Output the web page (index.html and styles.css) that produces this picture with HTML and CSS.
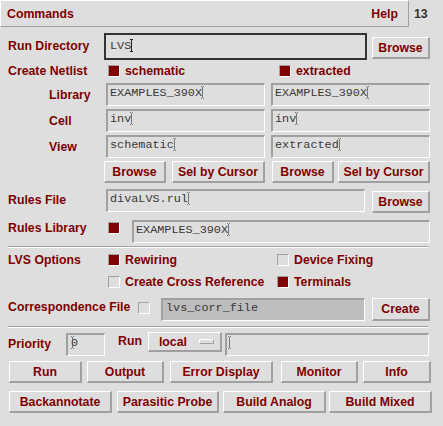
FILE: index.html
```html
<!DOCTYPE html>
<html>
<head>
  <title>LVS</title>
  <link rel="stylesheet" href="styles.css">
</head>
<body>
  <div class="top">
    <div class="menubar"><span>Commands</span><span>Help</span></div>
    <div class="pageno">13</div>
  </div>

  <div class="row rundir">
    <span class="label">Run Directory</span>
    <div class="field focus">LVS<span class="caret solid"></span></div>
    <button class="btn browse-top">Browse</button>
  </div>

  <div class="row netlist">
    <span class="label w100">Create Netlist</span>
    <label class="opt w171"><span class="box on"></span>schematic</label>
    <label class="opt"><span class="box on"></span>extracted</label>
  </div>

  <div class="row lib first">
    <span class="label sub">Library</span>
    <div class="field half">EXAMPLES_390X<span class="caret"></span></div>
    <div class="field half">EXAMPLES_390X<span class="caret"></span></div>
  </div>
  <div class="row lib">
    <span class="label sub">Cell</span>
    <div class="field half">inv<span class="caret"></span></div>
    <div class="field half">inv<span class="caret"></span></div>
  </div>
  <div class="row lib">
    <span class="label sub">View</span>
    <div class="field half">schematic<span class="caret"></span></div>
    <div class="field half">extracted<span class="caret"></span></div>
  </div>

  <div class="row pickers">
    <button class="btn b62">Browse</button>
    <button class="btn b93">Sel by Cursor</button>
    <button class="btn b62 gap7">Browse</button>
    <button class="btn b92 gap4">Sel by Cursor</button>
  </div>

  <div class="row rules">
    <span class="label w98">Rules File</span>
    <div class="field rulesfile">divaLVS.rul<span class="caret"></span></div>
    <button class="btn browse-rules">Browse</button>
  </div>

  <div class="row ruleslib">
    <span class="label w100">Rules Library</span>
    <span class="box on"></span>
    <div class="field libname">EXAMPLES_390X<span class="caret"></span></div>
  </div>

  <div class="sep"></div>

  <div class="row options">
    <span class="label w100">LVS Options</span>
    <label class="opt w169"><span class="box on"></span>Rewiring</label>
    <label class="opt"><span class="box"></span>Device Fixing</label>
  </div>
  <div class="row options second">
    <span class="label w100"></span>
    <label class="opt w169"><span class="box"></span>Create Cross Reference</label>
    <label class="opt"><span class="box on"></span>Terminals</label>
  </div>

  <div class="row corr">
    <span class="label w130">Correspondence File</span>
    <span class="box"></span>
    <div class="field corrfile">lvs_corr_file</div>
    <button class="btn create">Create</button>
  </div>

  <div class="sep second"></div>

  <div class="row priority">
    <span class="label w58">Priority</span>
    <div class="field prio">0<span class="caret over"></span></div>
    <span class="runlabel">Run</span>
    <div class="optmenu">local<span class="indicator"></span></div>
    <div class="field host"><span class="caret"></span></div>
  </div>

  <div class="row actions">
    <button class="btn" style="width:73px">Run</button>
    <button class="btn" style="width:77px;margin-left:5px">Output</button>
    <button class="btn" style="width:103px;margin-left:6px">Error Display</button>
    <button class="btn" style="width:77px;margin-left:8px">Monitor</button>
    <button class="btn" style="width:68px;margin-left:5px">Info</button>
  </div>
  <div class="row actions last">
    <button class="btn" style="width:103px">Backannotate</button>
    <button class="btn" style="width:102px;margin-left:5px">Parasitic Probe</button>
    <button class="btn" style="width:103px;margin-left:4px">Build Analog</button>
    <button class="btn" style="width:103px;margin-left:3px">Build Mixed</button>
  </div>
</body>
</html>
```

FILE: styles.css
```css
body {
    margin: 0;
    background: #dedede;
    font: bold 12.3px "Liberation Sans", Arial, sans-serif;
    color: #800000;
}

/* menu bar */
.top {
    display: flex;
    height: 27px;
}
.menubar {
    width: 409px;
    box-sizing: border-box;
    display: flex;
    justify-content: space-between;
    align-items: center;
    padding: 0 10px 0 6px;
    border-style: solid;
    border-width: 1px;
    border-color: #fff #a0a0a0 #a0a0a0 #fff;
}
.pageno {
    flex: 1;
    display: flex;
    align-items: center;
    padding-left: 5px;
    color: #333;
}

/* rows */
.row {
    display: flex;
    align-items: center;
    padding-left: 8px;
}
.label {
    flex: none;
    white-space: nowrap;
}
.w58 { width: 58px; }
.w98 { width: 98px; }
.w100 { width: 100px; }
.w130 { width: 130px; }
.w169 { width: 169px; }
.w171 { width: 171px; }

/* motif bevels */
.btn {
    box-sizing: border-box;
    flex: none;
    height: 22px;
    padding: 0;
    background: #dedede;
    font: inherit;
    color: inherit;
    border-style: solid;
    border-width: 1px 2px 2px 1px;
    border-color: #fff #a0a0a0 #a0a0a0 #fff;
}
.field {
    box-sizing: border-box;
    flex: none;
    height: 23px;
    padding: 1px 2px;
    font: 11.8px "Liberation Mono", "Courier New", monospace;
    line-height: 15px;
    color: #383838;
    white-space: pre;
    border-style: solid;
    border-width: 2px 1px 1px 2px;
    border-color: #a0a0a0 #fff #fff #a0a0a0;
}
.caret {
    display: inline-block;
    width: 3px;
    height: 13px;
    vertical-align: -3px;
    margin-left: -1px;
    background: linear-gradient(#555, #555) center / 1px 100% no-repeat;
    border-top: 1px dotted #555;
    border-bottom: 1px dotted #555;
    box-sizing: border-box;
    opacity: 0.75;
}
.caret.solid {
    opacity: 1;
    background: linear-gradient(#222, #222) center / 1px 100% no-repeat;
    border-top: 1px solid #222;
    border-bottom: 1px solid #222;
}
.caret.over {
    margin-left: -7px;
}
.box {
    flex: none;
    display: inline-block;
    width: 12px;
    height: 12px;
    box-sizing: border-box;
    border: 1px solid;
    border-color: #a0a0a0 #fff #fff #a0a0a0;
}
.box.on {
    background: #800000;
}
.opt {
    display: flex;
    align-items: center;
    gap: 5px;
    white-space: nowrap;
}

/* run directory */
.rundir {
    margin-top: 6px;
    height: 27px;
    align-items: flex-start;
}
.rundir .label {
    width: 96px;
    line-height: 27px;
}
.field.focus {
    width: 263px;
    height: 27px;
    border: 2px solid #333;
    padding: 3px 4px;
    line-height: 17px;
}
.browse-top {
    width: 58px;
    margin: 4px 0 0 5px;
}

.netlist {
    margin-top: 3px;
    height: 16px;
}

/* library / cell / view */
.lib {
    margin-top: 3px;
    height: 23px;
}
.lib.first {
    margin-top: 4px;
}
.lib .label.sub {
    width: 57px;
    padding-left: 41px;
}
.field.half {
    width: 159px;
}
.field.half + .field.half {
    margin-left: 6px;
}

.pickers {
    margin-top: 3px;
    padding-left: 104px;
}
.b62 { width: 62px; }
.b93 { width: 93px; margin-left: 6px; }
.b92 { width: 92px; }
.gap7 { margin-left: 7px; }
.gap4 { margin-left: 4px; }

/* rules */
.rules {
    margin-top: 6px;
    height: 24px;
    align-items: flex-start;
}
.rules .label {
    line-height: 23px;
}
.field.rulesfile {
    width: 259px;
}
.browse-rules {
    width: 58px;
    margin: 2px 0 0 7px;
}
.ruleslib {
    margin-top: 7px;
    height: 23px;
    align-items: flex-start;
}
.ruleslib .label {
    line-height: 17px;
}
.ruleslib .box {
    margin-top: 2px;
}
.field.libname {
    width: 298px;
    margin-left: 12px;
}

.sep {
    margin: 3px 0 0 8px;
    width: 420px;
    height: 2px;
    box-sizing: border-box;
    border-top: 1px solid #a0a0a0;
    border-bottom: 1px solid #fff;
}
.sep.second {
    margin-top: 5px;
}

/* options */
.options {
    margin-top: 5px;
    height: 14px;
}
.options.second {
    margin-top: 8px;
}

/* correspondence */
.corr {
    margin-top: 9px;
    height: 23px;
    align-items: flex-start;
}
.corr .label {
    line-height: 18px;
}
.corr .box {
    margin-top: 4px;
}
.field.corrfile {
    width: 204px;
    margin-left: 11px;
    padding-left: 3px;
    background: #bdbdbd;
}
.create {
    width: 58px;
    height: 23px;
    margin-left: 7px;
}

/* priority */
.priority {
    margin-top: 4px;
    height: 24px;
    align-items: flex-start;
}
.priority .label {
    margin-top: 5px;
    line-height: 14px;
}
.field.prio {
    width: 39px;
    margin-top: 1px;
    padding-left: 3px;
}
.runlabel {
    margin: 2px 0 0 13px;
    line-height: 14px;
}
.optmenu {
    box-sizing: border-box;
    width: 74px;
    height: 20px;
    margin-left: 6px;
    display: flex;
    align-items: center;
    padding-left: 10px;
    border-style: solid;
    border-width: 1px 2px 2px 1px;
    border-color: #fff #a0a0a0 #a0a0a0 #fff;
}
.indicator {
    box-sizing: border-box;
    width: 15px;
    height: 5px;
    margin: 0 6px 0 auto;
    border-style: solid;
    border-width: 1px;
    border-color: #fff #a0a0a0 #a0a0a0 #fff;
}
.field.host {
    width: 204px;
    margin: 1px 0 0 3px;
}

/* action buttons */
.actions {
    margin-top: 5px;
    padding-left: 9px;
}
.actions.last {
    margin-top: 8px;
}
```
